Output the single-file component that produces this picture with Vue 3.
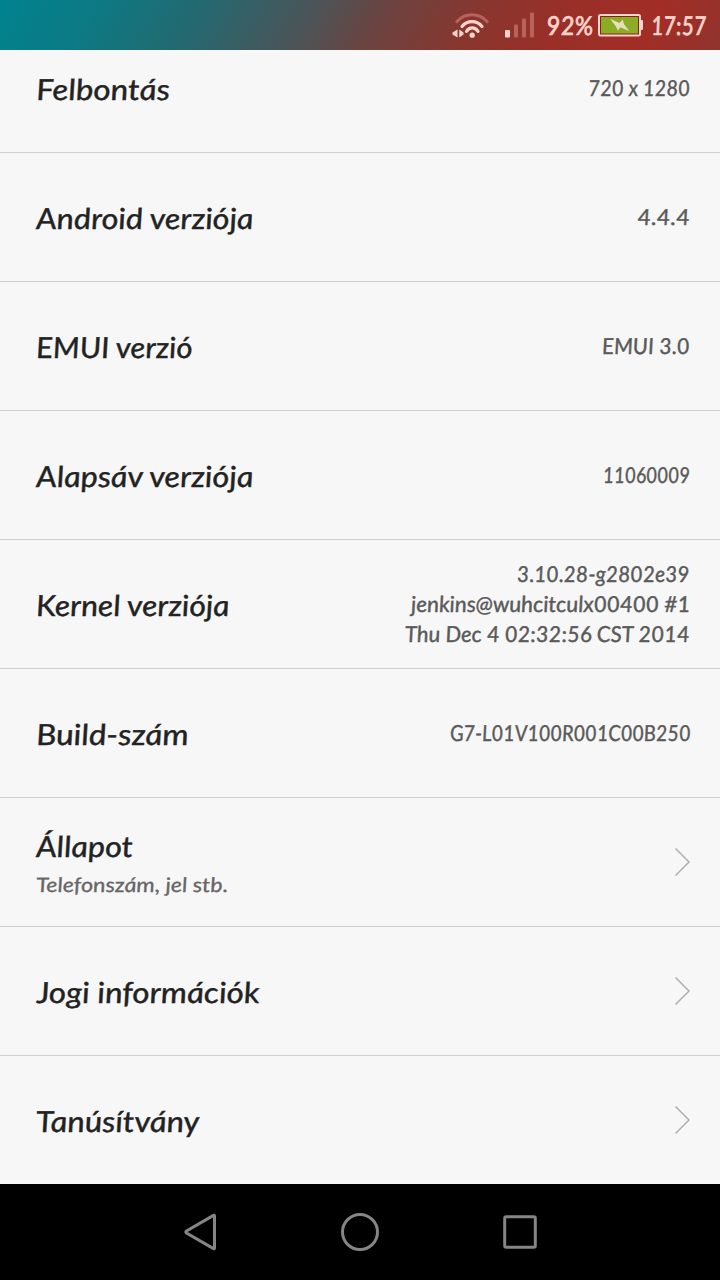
<script setup>
import { ref } from 'vue';

// stretch = horizontal scale of the lettering
const rows = ref([
  { id: 1, label: 'Felbontás', stretch: 1.147, values: [{ text: '720 x 1280', stretch: 0.925 }] },
  { id: 2, label: 'Android verziója', stretch: 1.118, values: [{ text: '4.4.4', stretch: 1.08 }] },
  { id: 3, label: 'EMUI verzió', stretch: 1.073, values: [{ text: 'EMUI 3.0', stretch: 1 }] },
  { id: 4, label: 'Alapsáv verziója', stretch: 1.122, values: [{ text: '11060009', stretch: 0.865 }] },
  {
    id: 5,
    label: 'Kernel verziója',
    stretch: 1.103,
    values: [
      { text: '3.10.28-g2802e39', stretch: 0.962 },
      { text: 'jenkins@wuhcitculx00400 #1', stretch: 1.022 },
      { text: 'Thu Dec 4 02:32:56 CST 2014', stretch: 1.004 },
    ],
  },
  { id: 6, label: 'Build-szám', stretch: 1.15, values: [{ text: 'G7-L01V100R001C00B250', stretch: 0.906 }] },
  { id: 7, label: 'Állapot', stretch: 1.12, summary: 'Telefonszám, jel stb.' },
  { id: 8, label: 'Jogi információk', stretch: 1.142 },
  { id: 9, label: 'Tanúsítvány', stretch: 1.134 },
]);

const lettering = (stretch) => ({ transform: `scaleX(${stretch}) skewX(4deg)` });
</script>

<template>
  <div class="phone">
    <header class="status-bar">
      <svg class="wifi" width="38" height="28" viewBox="0 0 38 28">
        <g fill="none" stroke-linecap="round" stroke-width="3.200">
          <path class="faint" d="M5 10.500C13 1.500 27 1.500 35 10.500" />
          <path d="M10 15.500C15 9 25 9 30 15.500" />
          <path d="M14.500 20.300C17.500 15.800 23 15.800 26 20.300" />
        </g>
        <circle cx="20.200" cy="24.200" r="2.600" />
        <path class="solid" d="M5.500 18.500V26.500L0.500 23.500V21.500ZM7.300 18.500V26.500L11.500 23.500V21.500Z" />
      </svg>
      <svg class="signal" width="30" height="26" viewBox="0 0 30 26">
        <rect x="0" y="18" width="5" height="7.500" rx="1" />
        <g class="faint-fill">
          <rect x="9" y="12.500" width="4" height="13" rx="1" />
          <rect x="17" y="6.500" width="4" height="19" rx="1" />
          <rect x="25" y="0.500" width="4" height="25" rx="1" />
        </g>
      </svg>
      <span class="percent">92%</span>
      <svg class="battery" width="46" height="23" viewBox="0 0 46 23">
        <rect class="case" x="1" y="1" width="41" height="20.500" rx="1.500" />
        <rect class="charge" x="3" y="3" width="37" height="16.500" />
        <path class="solid" d="M43 6h1q1 0 1 1v8q0 1-1 1h-1z" />
        <path class="bolt" d="M12 4.700L21.500 9L24.700 5.500L26 10.300L31.300 17L22.200 13.200L20 16.700L17.300 11.500Z" />
      </svg>
      <span class="clock">17:57</span>
    </header>

    <main class="list">
      <div v-for="row in rows" :key="row.id" class="row">
        <div class="titles">
          <span class="label" :style="lettering(row.stretch)">{{ row.label }}</span>
          <span v-if="row.summary" class="summary">{{ row.summary }}</span>
        </div>
        <div v-if="row.values" class="values">
          <span v-for="value in row.values" :key="value.text" :style="lettering(value.stretch)">{{ value.text }}</span>
        </div>
        <svg v-else class="chevron" width="18" height="30" viewBox="0 0 18 30">
          <path d="M2.500 1.500L16 15L2.500 28.500" />
        </svg>
      </div>
    </main>

    <nav class="nav-bar">
      <svg width="40" height="40" viewBox="0 0 40 40">
        <path d="M34.500 4V36Q34.500 37.200 33.500 36.600L6.500 21Q5.200 20 6.500 19L33.500 3.400Q34.500 2.800 34.500 4Z" />
      </svg>
      <svg width="40" height="40" viewBox="0 0 40 40">
        <circle cx="20" cy="20" r="17.500" />
      </svg>
      <svg width="40" height="40" viewBox="0 0 40 40">
        <rect x="4.700" y="4.700" width="30.600" height="30.600" rx="1.500" />
      </svg>
    </nav>
  </div>
</template>

<style>
body {
  margin: 0;
  background: #000;
}
</style>

<style scoped>
.phone {
  display: flex;
  flex-direction: column;
  width: 720px;
  height: 1280px;
  overflow: hidden;
  font-family: Lato, 'Open Sans', 'Liberation Sans', sans-serif;
  font-style: italic;
  background: #f7f7f7;
}

.status-bar {
  display: flex;
  align-items: center;
  flex: 0 0 50px;
  box-sizing: border-box;
  padding-left: 452px;
  color: #ffd3cc;
  font-size: 26px;
  line-height: 50px;
  white-space: nowrap;
  background: linear-gradient(120deg, #00838f 0%, #0c7a84 13%, #25686f 28%, #4a5559 42%, #6d423f 53%, #88362f 65%, #982f28 76%, #a22e26 89%, #90332d 100%);
  -webkit-text-stroke: 0.7px #ffd3cc;
}

.status-bar svg {
  flex: none;
  fill: #ffd3cc;
}

.wifi g {
  fill: none;
  stroke: #ffd3cc;
}

.wifi .faint {
  stroke: #b9625a;
}

.signal {
  margin-left: 15px;
}

.signal .faint-fill {
  fill: #b9625a;
}

.percent {
  width: 52px;
  margin-left: 11px;
  transform: scaleX(0.95) skewX(4deg);
  transform-origin: 0 50%;
}

.battery .case {
  fill: #8a1f18;
  stroke: #ffd3cc;
  stroke-width: 2;
}

.battery .charge {
  fill: #8aad25;
}

.battery .bolt {
  fill: #e6dfbb;
}

.clock {
  margin-left: 7px;
  transform: scaleX(0.83) skewX(4deg);
  transform-origin: 0 50%;
}

.list {
  display: flex;
  flex: 1;
  flex-direction: column;
  justify-content: flex-end;
  min-height: 0;
  overflow: hidden;
}

.row {
  display: flex;
  align-items: center;
  justify-content: space-between;
  flex: 0 0 129px;
  box-sizing: border-box;
  padding: 0 30px 0 36px;
  border-top: 1px solid #cfcfcf;
}

.titles {
  display: flex;
  flex-direction: column;
  align-items: flex-start;
  padding-top: 2px;
}

.label {
  color: #222;
  font-size: 29px;
  line-height: 40px;
  white-space: nowrap;
  transform-origin: 0 50%;
  -webkit-text-stroke: 0.4px #222;
}

.summary {
  margin: 3px 0 2px;
  color: #666;
  font-size: 20px;
  line-height: 30px;
  transform: scaleX(1.167) skewX(4deg);
  transform-origin: 0 50%;
  -webkit-text-stroke: 0.3px #666;
}

.values {
  display: flex;
  flex-direction: column;
  align-items: flex-end;
  color: #5a5a5a;
  font-size: 22px;
  line-height: 30px;
  white-space: nowrap;
  -webkit-text-stroke: 0.4px #5a5a5a;
}

.values span {
  transform-origin: 100% 50%;
}

.chevron {
  margin-right: -1px;
  fill: none;
  stroke: #b0b0b0;
  stroke-width: 1.5;
}

.nav-bar {
  display: flex;
  align-items: center;
  justify-content: center;
  gap: 120px;
  flex: 0 0 96px;
  background: #000;
}

.nav-bar svg {
  fill: none;
  stroke: #858585;
  stroke-width: 3;
}
</style>
